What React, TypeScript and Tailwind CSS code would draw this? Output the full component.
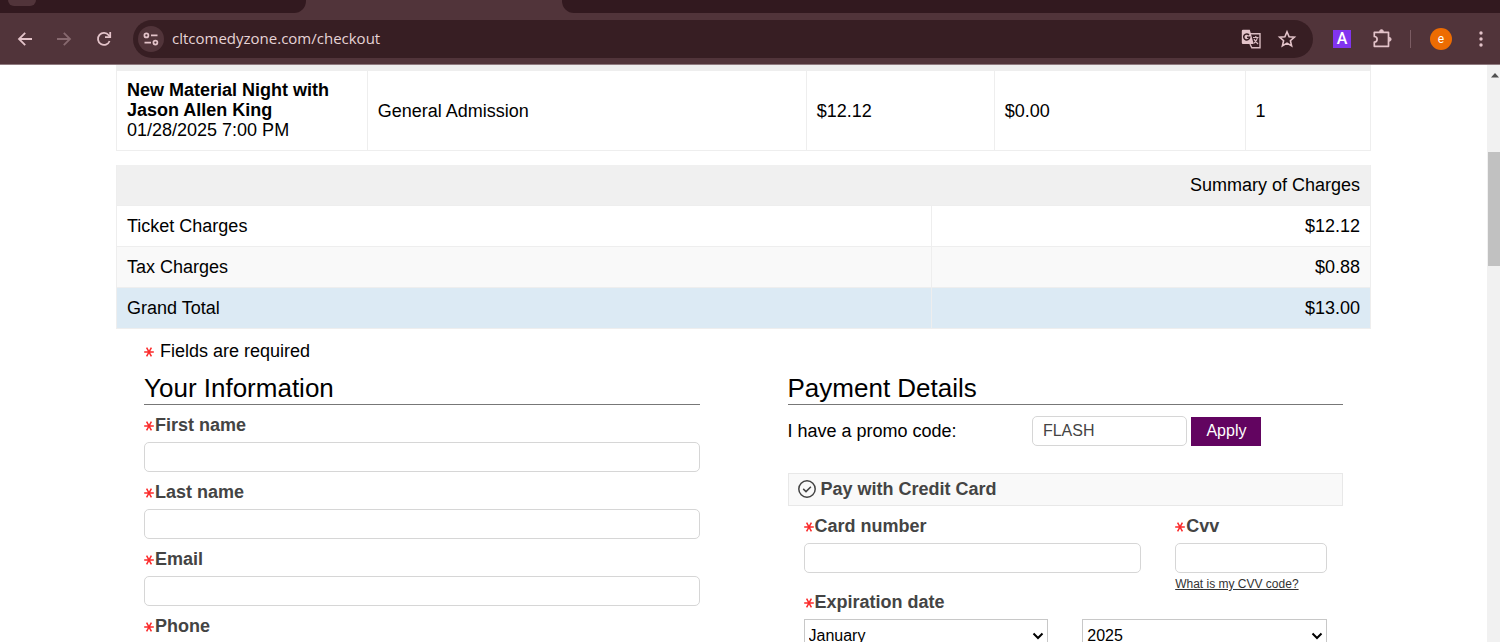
import type { ReactNode } from "react";

type Field = {
  id: string;
  label: string;
};

type Charge = {
  label: string;
  amount: string;
  row: string;
};

const charges: Charge[] = [
  { label: "Ticket Charges", amount: "$12.12", row: "bg-white" },
  { label: "Tax Charges", amount: "$0.88", row: "bg-[#f9f9f9]" },
  { label: "Grand Total", amount: "$13.00", row: "bg-[#dceaf4]" },
];

const fields: Field[] = [
  { id: "first-name", label: "First name" },
  { id: "last-name", label: "Last name" },
  { id: "email", label: "Email" },
  { id: "phone", label: "Phone" },
];

const inputClass =
  "block h-[30px] w-full rounded-[5px] border border-[#d6d6d6] bg-white px-2.5 text-base text-[#444] outline-none";

const selectClass =
  "block h-[34px] w-full appearance-none border border-[#c8c8c8] bg-white pl-1 text-base text-black";

function Required() {
  return (
    <svg viewBox="0 0 10 10" className="mt-0.5 h-2.5 w-2.5 shrink-0" aria-hidden="true">
      <path
        d="M.2 5h9.600M2.600.6l4.800 8.800M7.400.6L2.600 9.400"
        stroke="#fb2a2a"
        strokeWidth="1.5"
        fill="none"
      />
    </svg>
  );
}

function FieldLabel({ htmlFor, children }: { htmlFor: string; children: ReactNode }) {
  return (
    <label htmlFor={htmlFor} className="flex h-[27px] items-start text-lg leading-5 font-bold text-[#444]">
      <span className="flex h-5 w-[11px] items-center">
        <Required />
      </span>
      {children}
    </label>
  );
}

function TextField({ id, label }: Field) {
  return (
    <div className="mb-2.5">
      <FieldLabel htmlFor={id}>{label}</FieldLabel>
      <input id={id} type="text" className={inputClass} />
    </div>
  );
}

function SelectField({ id, label, options }: Field & { options: string[] }) {
  return (
    <div className="relative flex-1">
      <select id={id} aria-label={label} className={selectClass}>
        {options.map((option) => (
          <option key={option}>{option}</option>
        ))}
      </select>
      <svg
        viewBox="0 0 12 8"
        className="pointer-events-none absolute top-[13px] right-1 h-2 w-3"
        aria-hidden="true"
      >
        <path d="M1.5 1.5L6 6l4.5-4.5" stroke="#000" strokeWidth="2" fill="none" />
      </svg>
    </div>
  );
}

function BrowserBar() {
  return (
    <header className="shrink-0 bg-[#51343a]">
      <div className="flex h-[13px] overflow-hidden">
        <div className="w-[306px] rounded-br-[12px] bg-[#32191f]">
          <div className="ml-2 h-1.5 w-7 rounded-b-full bg-[#51343a]" />
        </div>
        <div className="w-64" />
        <div className="flex-1 rounded-bl-[12px] bg-[#32191f]" />
      </div>

      <div className="flex h-[52px] items-center border-b border-[#8f7a7f] text-[#e3c3c9]">
        <button type="button" aria-label="Back" className="ml-[13px] flex h-6 w-6 items-center justify-center">
          <svg viewBox="0 0 16 16" className="h-4 w-4" fill="none" stroke="currentColor" strokeWidth="1.8">
            <path d="M15 8H2M8.2 1.8L2 8l6.2 6.2" />
          </svg>
        </button>
        <button
          type="button"
          aria-label="Forward"
          className="ml-[15px] flex h-6 w-6 items-center justify-center text-[#87696f]"
        >
          <svg viewBox="0 0 16 16" className="h-4 w-4" fill="none" stroke="currentColor" strokeWidth="1.8">
            <path d="M1 8h13M7.8 1.8L14 8l-6.2 6.2" />
          </svg>
        </button>
        <button type="button" aria-label="Reload" className="ml-4 flex h-6 w-6 items-center justify-center">
          <svg viewBox="0 0 16 16" className="h-4 w-4" fill="none" stroke="currentColor" strokeWidth="1.8">
            <path d="M13.6 10A6 6 0 1 1 12.7 4.2L14 5.8" />
            <path d="M14.2 1v5.2H9" />
          </svg>
        </button>

        <div className="ml-[17px] flex h-[38px] flex-1 items-center rounded-full bg-[#371e23] pr-4 pl-[5px]">
          <button
            type="button"
            aria-label="View site information"
            className="flex h-[26px] w-[26px] items-center justify-center rounded-full bg-[#51343a]"
          >
            <svg viewBox="0 0 16 14" className="h-3.5 w-4" fill="none" stroke="currentColor" strokeWidth="1.7">
              <circle cx="3.4" cy="3.4" r="2" />
              <path d="M8 3.4h6.5M1.5 10.6H8" />
              <circle cx="12.4" cy="10.6" r="2" />
            </svg>
          </button>
          <input
            type="text"
            aria-label="Address"
            defaultValue="cltcomedyzone.com/checkout"
            className="ml-2 min-w-0 flex-1 bg-transparent font-['Open_Sans','Noto_Sans',sans-serif] text-[15px] text-[#e6d3d6] outline-none"
          />
          <button type="button" aria-label="Translate this page" className="flex h-5 w-5 items-center">
            <svg viewBox="0 0 20 20" className="h-5 w-5" fill="none">
              <path d="M8 4.7h11v14H10.800L9 15" stroke="#d9bcc1" strokeWidth="1.4" />
              <path d="M2 .8h6.800l3.900 14.200H2A1.200 1.200 0 0 1 .8 13.800V2A1.200 1.200 0 0 1 2 .8z" fill="#e3c3c9" />
              <path d="M8 6A3 3 0 1 0 8.700 8.200H6" stroke="#371e23" strokeWidth="1.5" />
              <path
                d="M12 8.500h5.500M14.800 7v1.500M16.500 8.500c-.4 2.300-1.900 4.400-3.600 5.700M13.100 10c.7 2 2.200 3.800 4 5"
                stroke="#d9bcc1"
                strokeWidth="1.2"
              />
            </svg>
          </button>
          <button type="button" aria-label="Bookmark this tab" className="ml-4 flex h-5 w-5 items-center">
            <svg viewBox="0 0 20 20" className="h-5 w-5" fill="none" stroke="currentColor" strokeWidth="1.6">
              <path d="M10 2.8l2.1 4.9 5.3.5-4 3.5 1.2 5.2L10 14.1l-4.6 2.8 1.2-5.2-4-3.5 5.3-.5z" />
            </svg>
          </button>
        </div>

        <button
          type="button"
          aria-label="Extension"
          className="ml-5 flex h-[18px] w-[18px] items-center justify-center bg-[#8134ef] font-['Roboto',sans-serif] text-base font-medium text-white"
        >
          A
        </button>
        <button type="button" aria-label="Extensions" className="ml-[21px] flex h-5 w-5 items-center">
          <svg
            viewBox="0 0 20 20"
            className="h-5 w-5"
            fill="none"
            stroke="currentColor"
            strokeWidth="1.7"
            strokeLinejoin="round"
          >
            <path d="M2.300 3.300h14.200v14H2.300v-4.200a2.800 2.800 0 0 0 0-5.600z" />
            <path d="M7.600 2.600a1.900 1.900 0 0 1 3.800 0zM17.200 8.400a1.900 1.900 0 0 1 0 3.800z" fill="currentColor" strokeWidth="1" />
          </svg>
        </button>
        <div className="ml-[18px] h-[18px] w-px bg-[#7b5c63]" />
        <button
          type="button"
          aria-label="Profile"
          className="ml-[19px] flex h-[22px] w-[22px] items-center justify-center rounded-full bg-[#ed6c02] font-['Roboto',sans-serif] text-xs text-white"
        >
          e
        </button>
        <button type="button" aria-label="Menu" className="mr-[9px] ml-[19px] flex h-5 w-5 items-center justify-center">
          <svg viewBox="0 0 4 18" className="h-[18px] w-1" fill="currentColor">
            <circle cx="2" cy="3" r="1.7" />
            <circle cx="2" cy="9" r="1.7" />
            <circle cx="2" cy="15" r="1.7" />
          </svg>
        </button>
      </div>
    </header>
  );
}

function TicketTable() {
  return (
    <table className="w-full table-fixed border-collapse text-lg leading-5">
      <colgroup>
        <col className="w-[20%]" />
        <col className="w-[35%]" />
        <col className="w-[15%]" />
        <col className="w-[20%]" />
        <col className="w-[10%]" />
      </colgroup>
      <tbody>
        <tr className="border-x border-t-[6px] border-b border-[#eee]">
          <td className="border-r border-[#eee] pt-[9px] pr-4 pb-2.5 pl-2.5">
            <strong className="block">New Material Night with Jason Allen King</strong>
            01/28/2025 7:00 PM
          </td>
          <td className="border-r border-[#eee] px-2.5">General Admission</td>
          <td className="border-r border-[#eee] px-2.5">$12.12</td>
          <td className="border-r border-[#eee] px-2.5">$0.00</td>
          <td className="px-2.5">1</td>
        </tr>
      </tbody>
    </table>
  );
}

function SummaryTable() {
  return (
    <table className="mt-3.5 w-full table-fixed border-collapse text-lg leading-5">
      <colgroup>
        <col className="w-[65%]" />
        <col className="w-[35%]" />
      </colgroup>
      <thead>
        <tr className="border-x border-[#eee] bg-[#f0f0f0]">
          <th colSpan={2} className="px-2.5 py-2.5 text-right font-normal">
            Summary of Charges
          </th>
        </tr>
      </thead>
      <tbody>
        {charges.map((charge) => (
          <tr key={charge.label} className={`border border-[#eee] ${charge.row}`}>
            <td className="border-r border-[#eee] px-2.5 py-2.5">{charge.label}</td>
            <td className="px-2.5 py-2.5 text-right">{charge.amount}</td>
          </tr>
        ))}
      </tbody>
    </table>
  );
}

function YourInformation() {
  return (
    <section>
      <h2 className="mb-2.5 border-b border-[#777] text-[26px] leading-8">Your Information</h2>
      {fields.map((field) => (
        <TextField key={field.id} {...field} />
      ))}
    </section>
  );
}

function PaymentDetails() {
  return (
    <section>
      <h2 className="mb-[11px] border-b border-[#777] text-[26px] leading-8">Payment Details</h2>

      <div className="flex items-center">
        <label htmlFor="promo" className="w-[44%] text-lg leading-5">
          I have a promo code:
        </label>
        <div className="w-[28%]">
          <input id="promo" type="text" defaultValue="FLASH" className={inputClass} />
        </div>
        <button type="button" className="ml-1 h-[29px] bg-[#620460] px-[15px] text-base text-white">
          Apply
        </button>
      </div>

      <h3 className="mt-[27px] flex h-[33px] items-center gap-1 border border-[#e8e8e8] bg-[#f9f9f9] px-2 pb-0.5 text-lg font-bold text-[#444]">
        <svg viewBox="0 0 20 20" className="h-5 w-5" fill="none" stroke="#444" strokeWidth="1.5">
          <circle cx="10" cy="10" r="8.2" />
          <path d="M6.2 9.9l2.8 2.7 4.9-4.9" />
        </svg>
        Pay with Credit Card
      </h3>

      <div className="mt-2.5 px-4">
        <div className="flex gap-[34px]">
          <div className="flex-1">
            <FieldLabel htmlFor="card-number">Card number</FieldLabel>
            <input id="card-number" type="text" className={inputClass} />
          </div>
          <div className="w-[29%]">
            <FieldLabel htmlFor="cvv">Cvv</FieldLabel>
            <input id="cvv" type="text" className={inputClass} />
            <a href="#cvv-help" className="mt-1 block text-xs leading-[15px] text-[#333] underline">
              What is my CVV code?
            </a>
          </div>
        </div>

        <FieldLabel htmlFor="exp-month">Expiration date</FieldLabel>
        <div className="flex gap-[34px]">
          <SelectField id="exp-month" label="Expiration month" options={["January", "February", "March"]} />
          <SelectField id="exp-year" label="Expiration year" options={["2025", "2026", "2027"]} />
        </div>
      </div>
    </section>
  );
}

export default function App() {
  return (
    <div className="flex h-screen flex-col overflow-hidden bg-white font-['Liberation_Sans',Arial,sans-serif] text-black">
      <BrowserBar />
      <div className="flex min-h-0 flex-1">
        <main className="flex-1 overflow-hidden px-29">
          <TicketTable />
          <SummaryTable />
          <div className="px-7">
            <p className="mt-3 flex items-center gap-1.5 text-lg leading-5">
              <Required />
              Fields are required
            </p>
            <div className="mt-[11px] grid grid-cols-2 gap-22">
              <YourInformation />
              <PaymentDetails />
            </div>
          </div>
        </main>
        <div className="w-[13px] shrink-0 overflow-hidden bg-[#f1f1f1] pl-px">
          <svg viewBox="0 0 12 8" className="mt-1.5 ml-0.5 h-2 w-3" aria-hidden="true">
            <path d="M1 6.5L5 2l4 4.5z" fill="#505050" />
          </svg>
          <div className="mt-[73px] h-[114px] bg-[#c1c1c1]" />
        </div>
      </div>
    </div>
  );
}
